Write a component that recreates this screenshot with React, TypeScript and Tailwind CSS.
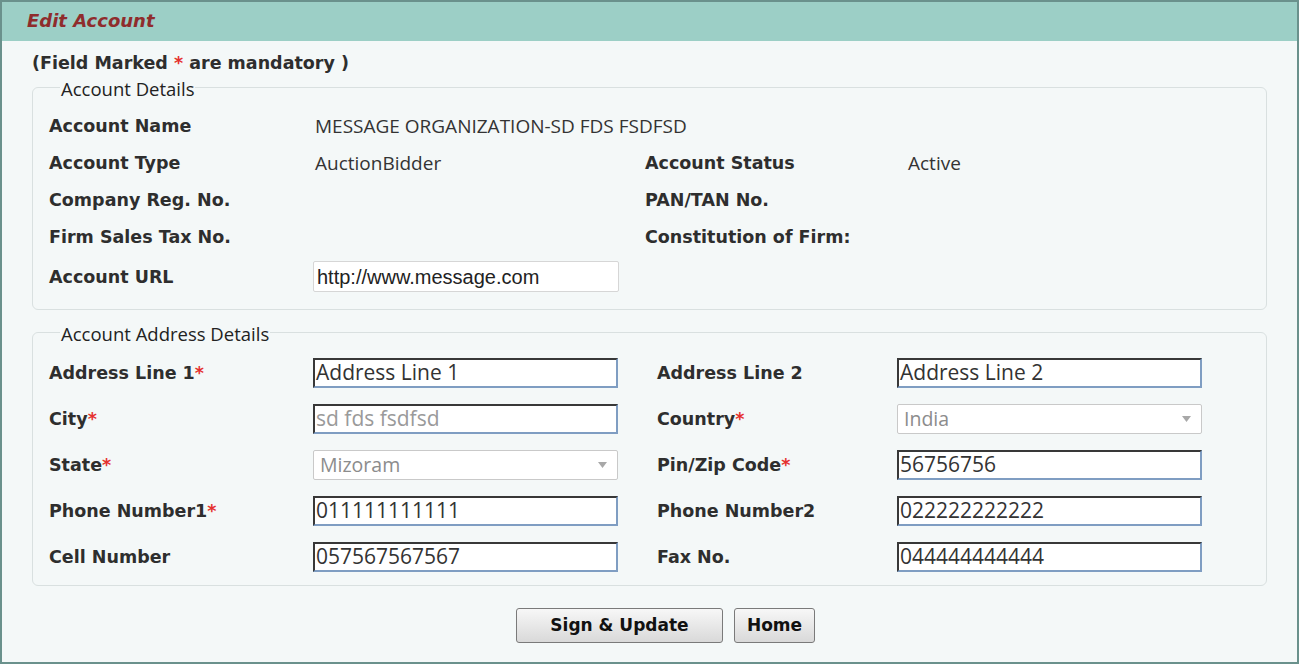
import React from 'react';

const label = "font-['DejaVu_Sans',sans-serif] text-[17.5px] leading-[22px] font-bold text-[#2e2e2e]";
const value = "font-['Open_Sans',sans-serif] text-[19px] leading-[22px] text-[#333]";
const legend = "ml-[11px] px-[1px] pt-[4px] font-['Open_Sans',sans-serif] text-[18.5px] leading-[22px] text-[#222]";

function Star() {
  return <span className="text-[#e5312f]">*</span>;
}

function TextBox({ val, muted }: { val: string; muted?: boolean }) {
  return (
    <div
      className={`h-[30px] w-[305px] overflow-hidden border-2 border-t-[#383838] border-l-[#383838] border-r-[#7f9dc2] border-b-[#7f9dc2] bg-white pl-[1px] font-['Open_Sans',sans-serif] text-[21px] leading-[24px] ${muted ? 'text-[#9a9a9a]' : 'text-[#333]'}`}
    >
      {val}
    </div>
  );
}

function SelectBox({ val }: { val: string }) {
  return (
    <div className="flex h-[30px] w-[305px] items-center justify-between rounded-[2px] border border-[#c9c9c9] bg-white pr-[10px] pl-[6px] font-['Open_Sans',sans-serif] text-[19.5px] text-[#8c8c8c]">
      <span>{val}</span>
      <svg width="9" height="6" viewBox="0 0 9 6">
        <path d="M0 0h9L4.5 6z" fill="#a8a8a8" />
      </svg>
    </div>
  );
}

function AddrRow({ children }: { children: React.ReactNode }) {
  return <div className="flex h-[30px] items-center">{children}</div>;
}

export default function App() {
  return (
    <div className="h-[665px] w-[1300px] bg-white">
      <div className="flex h-[664px] w-[1299px] flex-col border-2 border-[#6a918c] bg-[#f4f8f8]">
        <div className="flex h-[39px] items-center bg-[#9ccfc6] pb-[2px] pl-[25px]">
          <span className="font-['DejaVu_Sans',sans-serif] text-[18px] font-bold italic text-[#8f2c2c]">
            Edit Account
          </span>
        </div>
        <div className="px-[30px] pt-[11px]">
          <div className={label}>
            (Field Marked <Star /> are mandatory )
          </div>

          <fieldset className="rounded-[6px] border border-[#d9e0e0] pt-[7px] pb-[11px] pl-[16px]">
            <legend className={legend}>Account Details</legend>
            <div className="flex flex-col">
              <div className="flex h-[37px] items-center">
                <div className={`${label} w-[266px]`}>Account Name</div>
                <div className={value}>MESSAGE ORGANIZATION-SD FDS FSDFSD</div>
              </div>
              <div className="flex h-[37px] items-center">
                <div className={`${label} w-[266px]`}>Account Type</div>
                <div className={`${value} w-[330px]`}>AuctionBidder</div>
                <div className={`${label} w-[263px]`}>Account Status</div>
                <div className={value}>Active</div>
              </div>
              <div className="flex h-[37px] items-center">
                <div className={`${label} w-[596px]`}>Company Reg. No.</div>
                <div className={label}>PAN/TAN No.</div>
              </div>
              <div className="flex h-[37px] items-center">
                <div className={`${label} w-[596px]`}>Firm Sales Tax No.</div>
                <div className={label}>Constitution of Firm:</div>
              </div>
              <div className="flex h-[43px] items-center">
                <div className={`${label} w-[264px]`}>Account URL</div>
                <div className="flex h-[31px] w-[306px] items-center rounded-[2px] border border-[#d6d6d6] bg-white pl-[3px] font-['Liberation_Sans',sans-serif] text-[20px] text-[#222]">
                  http://www.message.com
                </div>
              </div>
            </div>
          </fieldset>

          <fieldset className="mt-[9px] rounded-[6px] border border-[#d9e0e0] pt-[13px] pb-[13px] pl-[16px]">
            <legend className={legend}>Account Address Details</legend>
            <div className="flex flex-col gap-[16px]">
              <AddrRow>
                <div className={`${label} w-[264px]`}>
                  Address Line 1<Star />
                </div>
                <div className="w-[344px]"><TextBox val="Address Line 1" /></div>
                <div className={`${label} w-[240px]`}>Address Line 2</div>
                <TextBox val="Address Line 2" />
              </AddrRow>
              <AddrRow>
                <div className={`${label} w-[264px]`}>
                  City<Star />
                </div>
                <div className="w-[344px]"><TextBox val="sd fds fsdfsd" muted /></div>
                <div className={`${label} w-[240px]`}>
                  Country<Star />
                </div>
                <SelectBox val="India" />
              </AddrRow>
              <AddrRow>
                <div className={`${label} w-[264px]`}>
                  State<Star />
                </div>
                <div className="w-[344px]"><SelectBox val="Mizoram" /></div>
                <div className={`${label} w-[240px]`}>
                  Pin/Zip Code<Star />
                </div>
                <TextBox val="56756756" />
              </AddrRow>
              <AddrRow>
                <div className={`${label} w-[264px]`}>
                  Phone Number1<Star />
                </div>
                <div className="w-[344px]"><TextBox val="011111111111" /></div>
                <div className={`${label} w-[240px]`}>Phone Number2</div>
                <TextBox val="022222222222" />
              </AddrRow>
              <AddrRow>
                <div className={`${label} w-[264px]`}>Cell Number</div>
                <div className="w-[344px]"><TextBox val="057567567567" /></div>
                <div className={`${label} w-[240px]`}>Fax No.</div>
                <TextBox val="044444444444" />
              </AddrRow>
            </div>
          </fieldset>

          <div className="mt-[22px] flex gap-[11px] pl-[484px]">
            <button className="h-[35px] w-[207px] rounded-[3px] border border-[#7a7a7a] bg-gradient-to-b from-[#f7f7f7] to-[#d9d9d9] font-['DejaVu_Sans',sans-serif] text-[17px] font-bold text-[#111]">
              Sign &amp; Update
            </button>
            <button className="h-[35px] w-[81px] rounded-[3px] border border-[#7a7a7a] bg-gradient-to-b from-[#f7f7f7] to-[#d9d9d9] font-['DejaVu_Sans',sans-serif] text-[17px] font-bold text-[#111]">
              Home
            </button>
          </div>
        </div>
      </div>
    </div>
  );
}
